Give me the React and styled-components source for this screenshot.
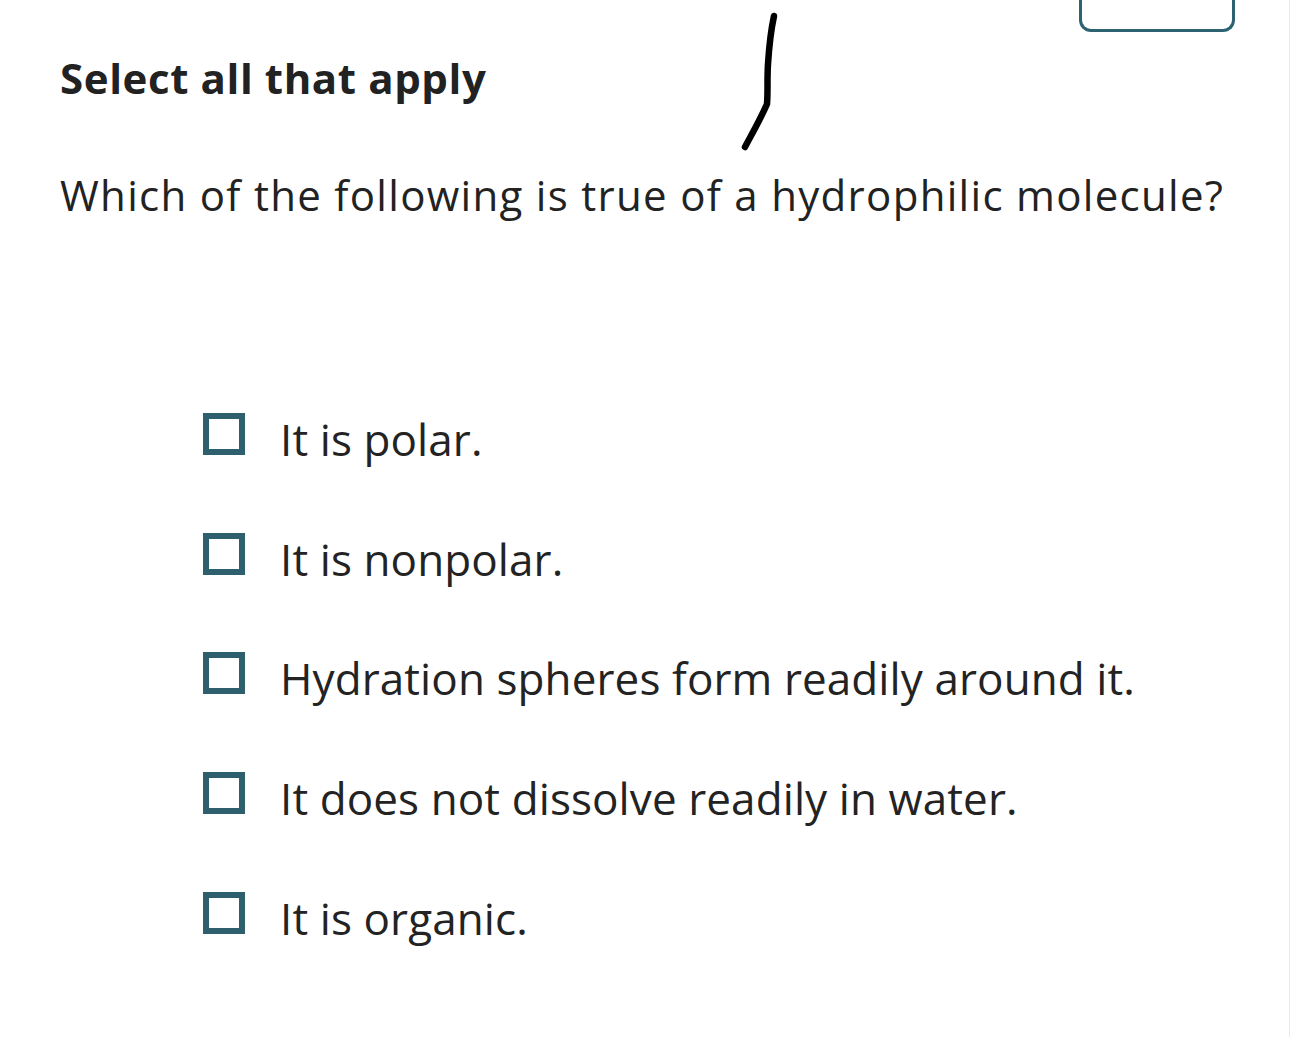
import React from "react";
import styled, { createGlobalStyle } from "styled-components";

const options = [
  "It is polar.",
  "It is nonpolar.",
  "Hydration spheres form readily around it.",
  "It does not dissolve readily in water.",
  "It is organic.",
];

const App = () => {
  return (
    <Page>
      <GlobalStyle />
      <TopBar>
        <TabStub />
      </TopBar>

      {/* pen scribble drawn over the page */}
      <Scribble width="50" height="160" viewBox="0 0 50 160">
        <path
          d="M40 16 C37 30 35 48 34 64 C33 80 34 92 33 104 C27 118 19 132 11 147"
          fill="none"
          stroke="#000"
          strokeWidth="6.5"
          strokeLinecap="round"
          strokeLinejoin="round"
        />
      </Scribble>

      <Heading>Select all that apply</Heading>
      <Question>Which of the following is true of a hydrophilic molecule?</Question>

      <OptionList>
        {options.map((text) => (
          <Option key={text}>
            <Box />
            <OptionText>{text}</OptionText>
          </Option>
        ))}
      </OptionList>
    </Page>
  );
};

export default App;

const GlobalStyle = createGlobalStyle`
  html, body {
    margin: 0;
    padding: 0;
    background: #fff;
  }
  body {
    font-family: "Open Sans", "Noto Sans", sans-serif;
    color: #232323;
  }
`;

const Page = styled.div`
  position: relative;
  width: 1290px;
  height: 1037px;
  box-sizing: border-box;
  border-right: 1px solid #e8e8e8;
  background: #fff;
  overflow: hidden;
`;

const TopBar = styled.div`
  display: flex;
  justify-content: flex-end;
  padding-right: 54px;
  height: 32px;
`;

const TabStub = styled.div`
  width: 156px;
  height: 32px;
  box-sizing: border-box;
  border: 3px solid #2d6272;
  border-top: none;
  border-radius: 0 0 12px 12px;
`;

const Scribble = styled.svg`
  position: absolute;
  left: 734px;
  top: 0;
`;

const Heading = styled.h1`
  margin: 21px 0 0 60px;
  font-size: 42px;
  line-height: 1.2;
  font-weight: 700;
  letter-spacing: 0.6px;
  color: #222;
`;

const Question = styled.p`
  margin: 67px 0 0 60px;
  font-size: 42px;
  line-height: 1.2;
  font-weight: 400;
  letter-spacing: 1.3px;
  color: #222;
`;

const OptionList = styled.div`
  display: flex;
  flex-direction: column;
  gap: 67px;
  margin: 192px 0 0 203px;
`;

const Option = styled.label`
  display: flex;
  align-items: flex-start;
  gap: 35px;
`;

const Box = styled.span`
  width: 42px;
  height: 42px;
  box-sizing: border-box;
  border: 6px solid #2d5f6d;
  flex-shrink: 0;
`;

const OptionText = styled.span`
  font-size: 44px;
  line-height: 1.2;
  letter-spacing: 0.1px;
  color: #232323;
`;
